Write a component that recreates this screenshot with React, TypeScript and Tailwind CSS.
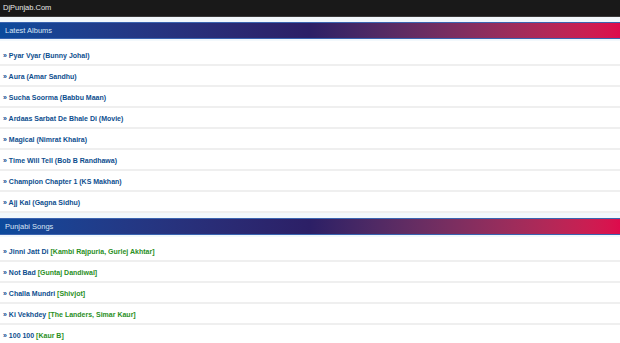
const albums = [
  "Pyar Vyar (Bunny Johal)",
  "Aura (Amar Sandhu)",
  "Sucha Soorma (Babbu Maan)",
  "Ardaas Sarbat De Bhale Di (Movie)",
  "Magical (Nimrat Khaira)",
  "Time Will Tell (Bob B Randhawa)",
  "Champion Chapter 1 (KS Makhan)",
  "Ajj Kal (Gagna Sidhu)",
]

const songs = [
  ["Jinni Jatt Di", "Kambi Rajpuria, Gurlej Akhtar"],
  ["Not Bad", "Guntaj Dandiwal"],
  ["Challa Mundri", "Shivjot"],
  ["Ki Vekhdey", "The Landers, Simar Kaur"],
  ["100 100", "Kaur B"],
]

function Title({ text }: { text: string }) {
  return (
    <div className="bg-[#f2f8fc] pt-[5px] pb-[2px] mb-[4px]">
      <div className="h-[17px] flex items-center pl-[5px] text-[7.5px] text-[#d6e4f5] border-y border-[#3a64b0] bg-gradient-to-r from-[#0b4a9c] via-[#2c1f66] to-[#de0a4c]">
        {text}
      </div>
    </div>
  )
}

export default function App() {
  return (
    <div className="w-[620px] h-[343px] overflow-hidden bg-white font-['Liberation_Sans',Arial,sans-serif]">
      <div className="h-[17px] bg-[#191919] border-b border-[#3a3a3a] flex items-center pl-[3px] text-[7.5px] text-[#e8e8e8]">
        DjPunjab.Com
      </div>

      <Title text="Latest Albums" />
      <div>
        {albums.map((a) => (
          <div key={a} className="h-[21px] flex items-center pt-[3px] pl-[3px] border-b-2 border-[#efefef] text-[7px] font-bold text-[#0d4e8e]">
            » {a}
          </div>
        ))}
      </div>

      <Title text="Punjabi Songs" />
      <div>
        {songs.map(([t, s]) => (
          <div key={t} className="h-[21px] flex items-center pt-[3px] pl-[3px] border-b-2 border-[#efefef] text-[7px] font-bold text-[#0d4e8e]">
            » {t}&nbsp;<span className="text-[#2a8f1e]">[{s}]</span>
          </div>
        ))}
      </div>
    </div>
  )
}
